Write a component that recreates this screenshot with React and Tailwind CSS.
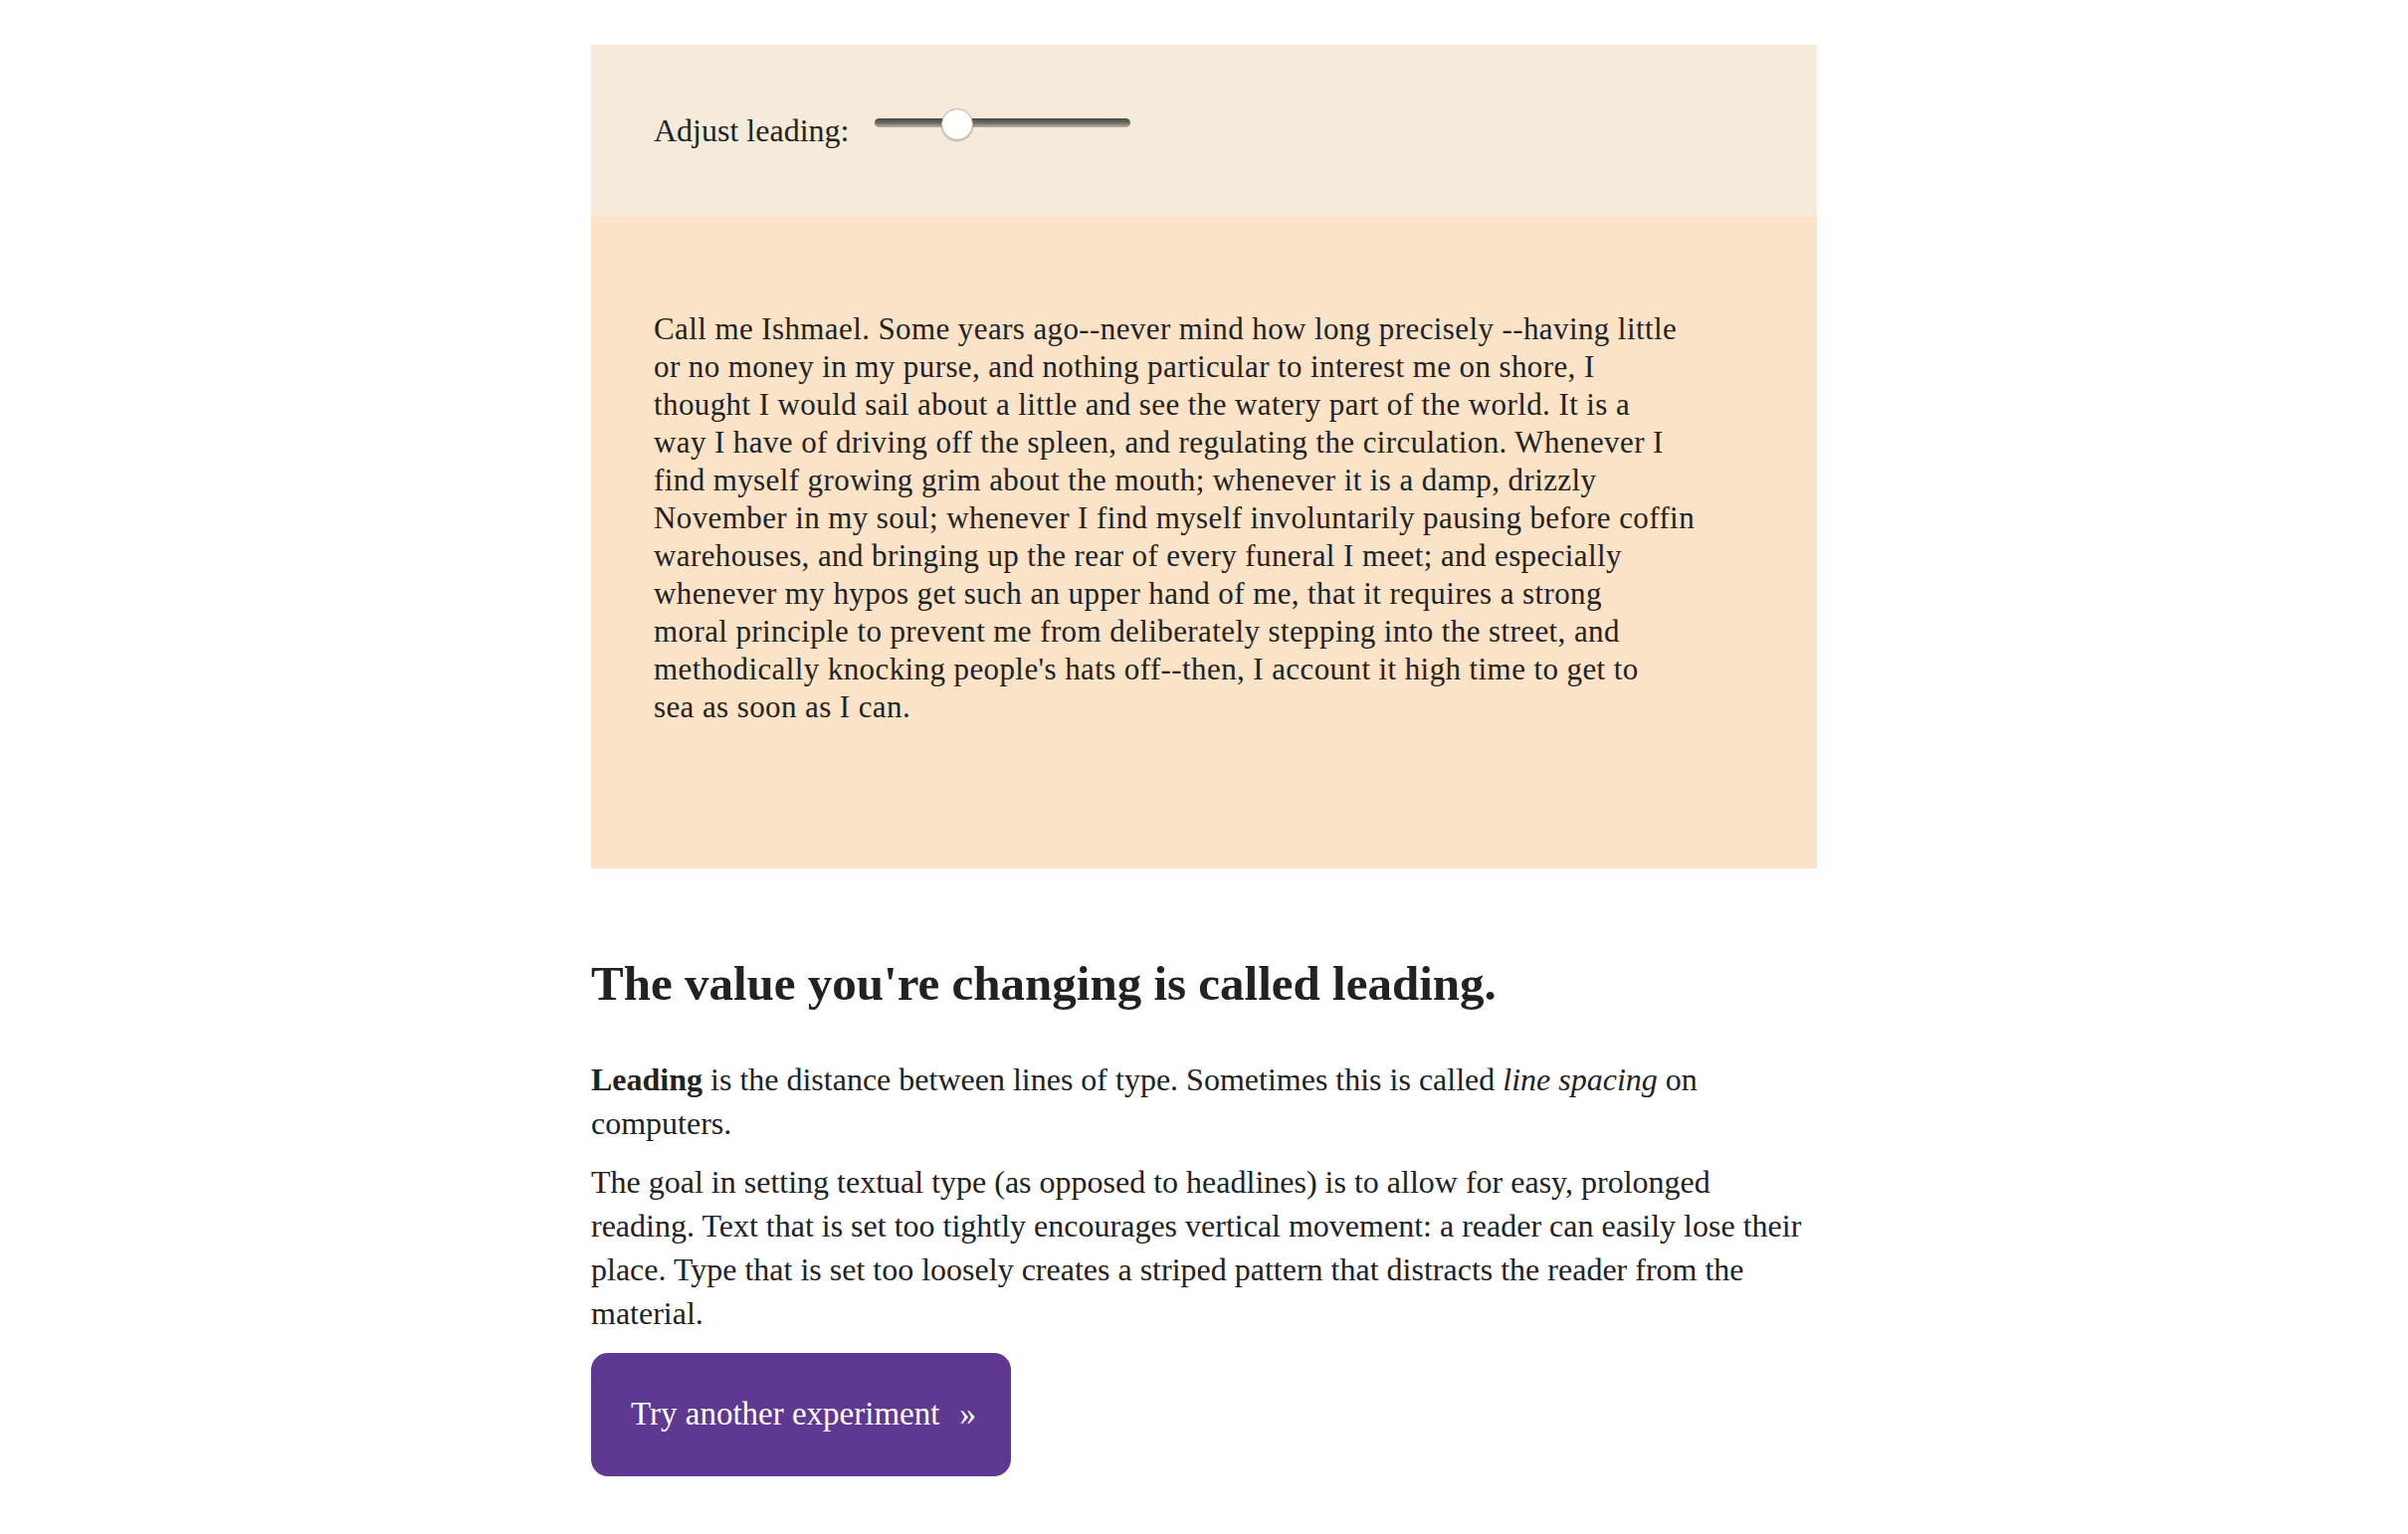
import React from 'react';

const mobyLines = [
  'Call me Ishmael. Some years ago--never mind how long precisely --having little',
  'or no money in my purse, and nothing particular to interest me on shore, I',
  'thought I would sail about a little and see the watery part of the world. It is a',
  'way I have of driving off the spleen, and regulating the circulation. Whenever I',
  'find myself growing grim about the mouth; whenever it is a damp, drizzly',
  'November in my soul; whenever I find myself involuntarily pausing before coffin',
  'warehouses, and bringing up the rear of every funeral I meet; and especially',
  'whenever my hypos get such an upper hand of me, that it requires a strong',
  'moral principle to prevent me from deliberately stepping into the street, and',
  "methodically knocking people's hats off--then, I account it high time to get to",
  'sea as soon as I can.',
];

const LeadingSlider = () => (
  <div className="relative w-[257px] h-[9px] -mt-[16px] rounded-full bg-gradient-to-b from-[#4a4844] via-[#6e6b66] to-[#b9b2a6]">
    {/* thumb */}
    <div className="absolute left-[67px] -top-[10px] w-[32px] h-[32px] rounded-full bg-white border border-[#bdb6ab] shadow-[0_1px_2px_rgba(0,0,0,0.25)]" />
  </div>
);

export default function App() {
  return (
    <div className="min-h-screen bg-white text-[#222] font-['Liberation_Serif',serif]">
      <div className="w-[1232px] mx-auto pt-[45px] pb-[60px]">
        {/* Demo */}
        <div className="bg-[#f6ebdb] h-[172px] pl-[63px] flex items-center gap-[26px]">
          <label className="text-[32px] leading-none">Adjust leading:</label>
          <LeadingSlider />
        </div>
        <div className="bg-[#fae3c7] h-[656px] pl-[63px] pt-[95px]">
          <p className="text-[31px] leading-[38px] tracking-[0.4px] whitespace-nowrap">
            {mobyLines.map((line, i) => (
              <span key={i} className="block">{line}</span>
            ))}
          </p>
        </div>

        {/* Explanation */}
        <h2 className="mt-[88px] text-[49px] leading-[56px] font-bold">
          The value you're changing is called leading.
        </h2>
        <p className="mt-[46px] text-[32px] leading-[44px]">
          <strong>Leading</strong> is the distance between lines of type. Sometimes this is called <em>line spacing</em> on
          <br />
          computers.
        </p>
        <p className="mt-[15px] text-[32px] leading-[44px]">
          The goal in setting textual type (as opposed to headlines) is to allow for easy, prolonged
          <br />
          reading. Text that is set too tightly encourages vertical movement: a reader can easily lose their
          <br />
          place. Type that is set too loosely creates a striped pattern that distracts the reader from the
          <br />
          material.
        </p>
        <button className="mt-[18px] w-[422px] h-[124px] rounded-[17px] bg-[#5f3891] text-white text-[33px] flex items-center pl-[40px] gap-[20px]">
          <span>Try another experiment</span>
          <span>»</span>
        </button>
      </div>
    </div>
  );
}
